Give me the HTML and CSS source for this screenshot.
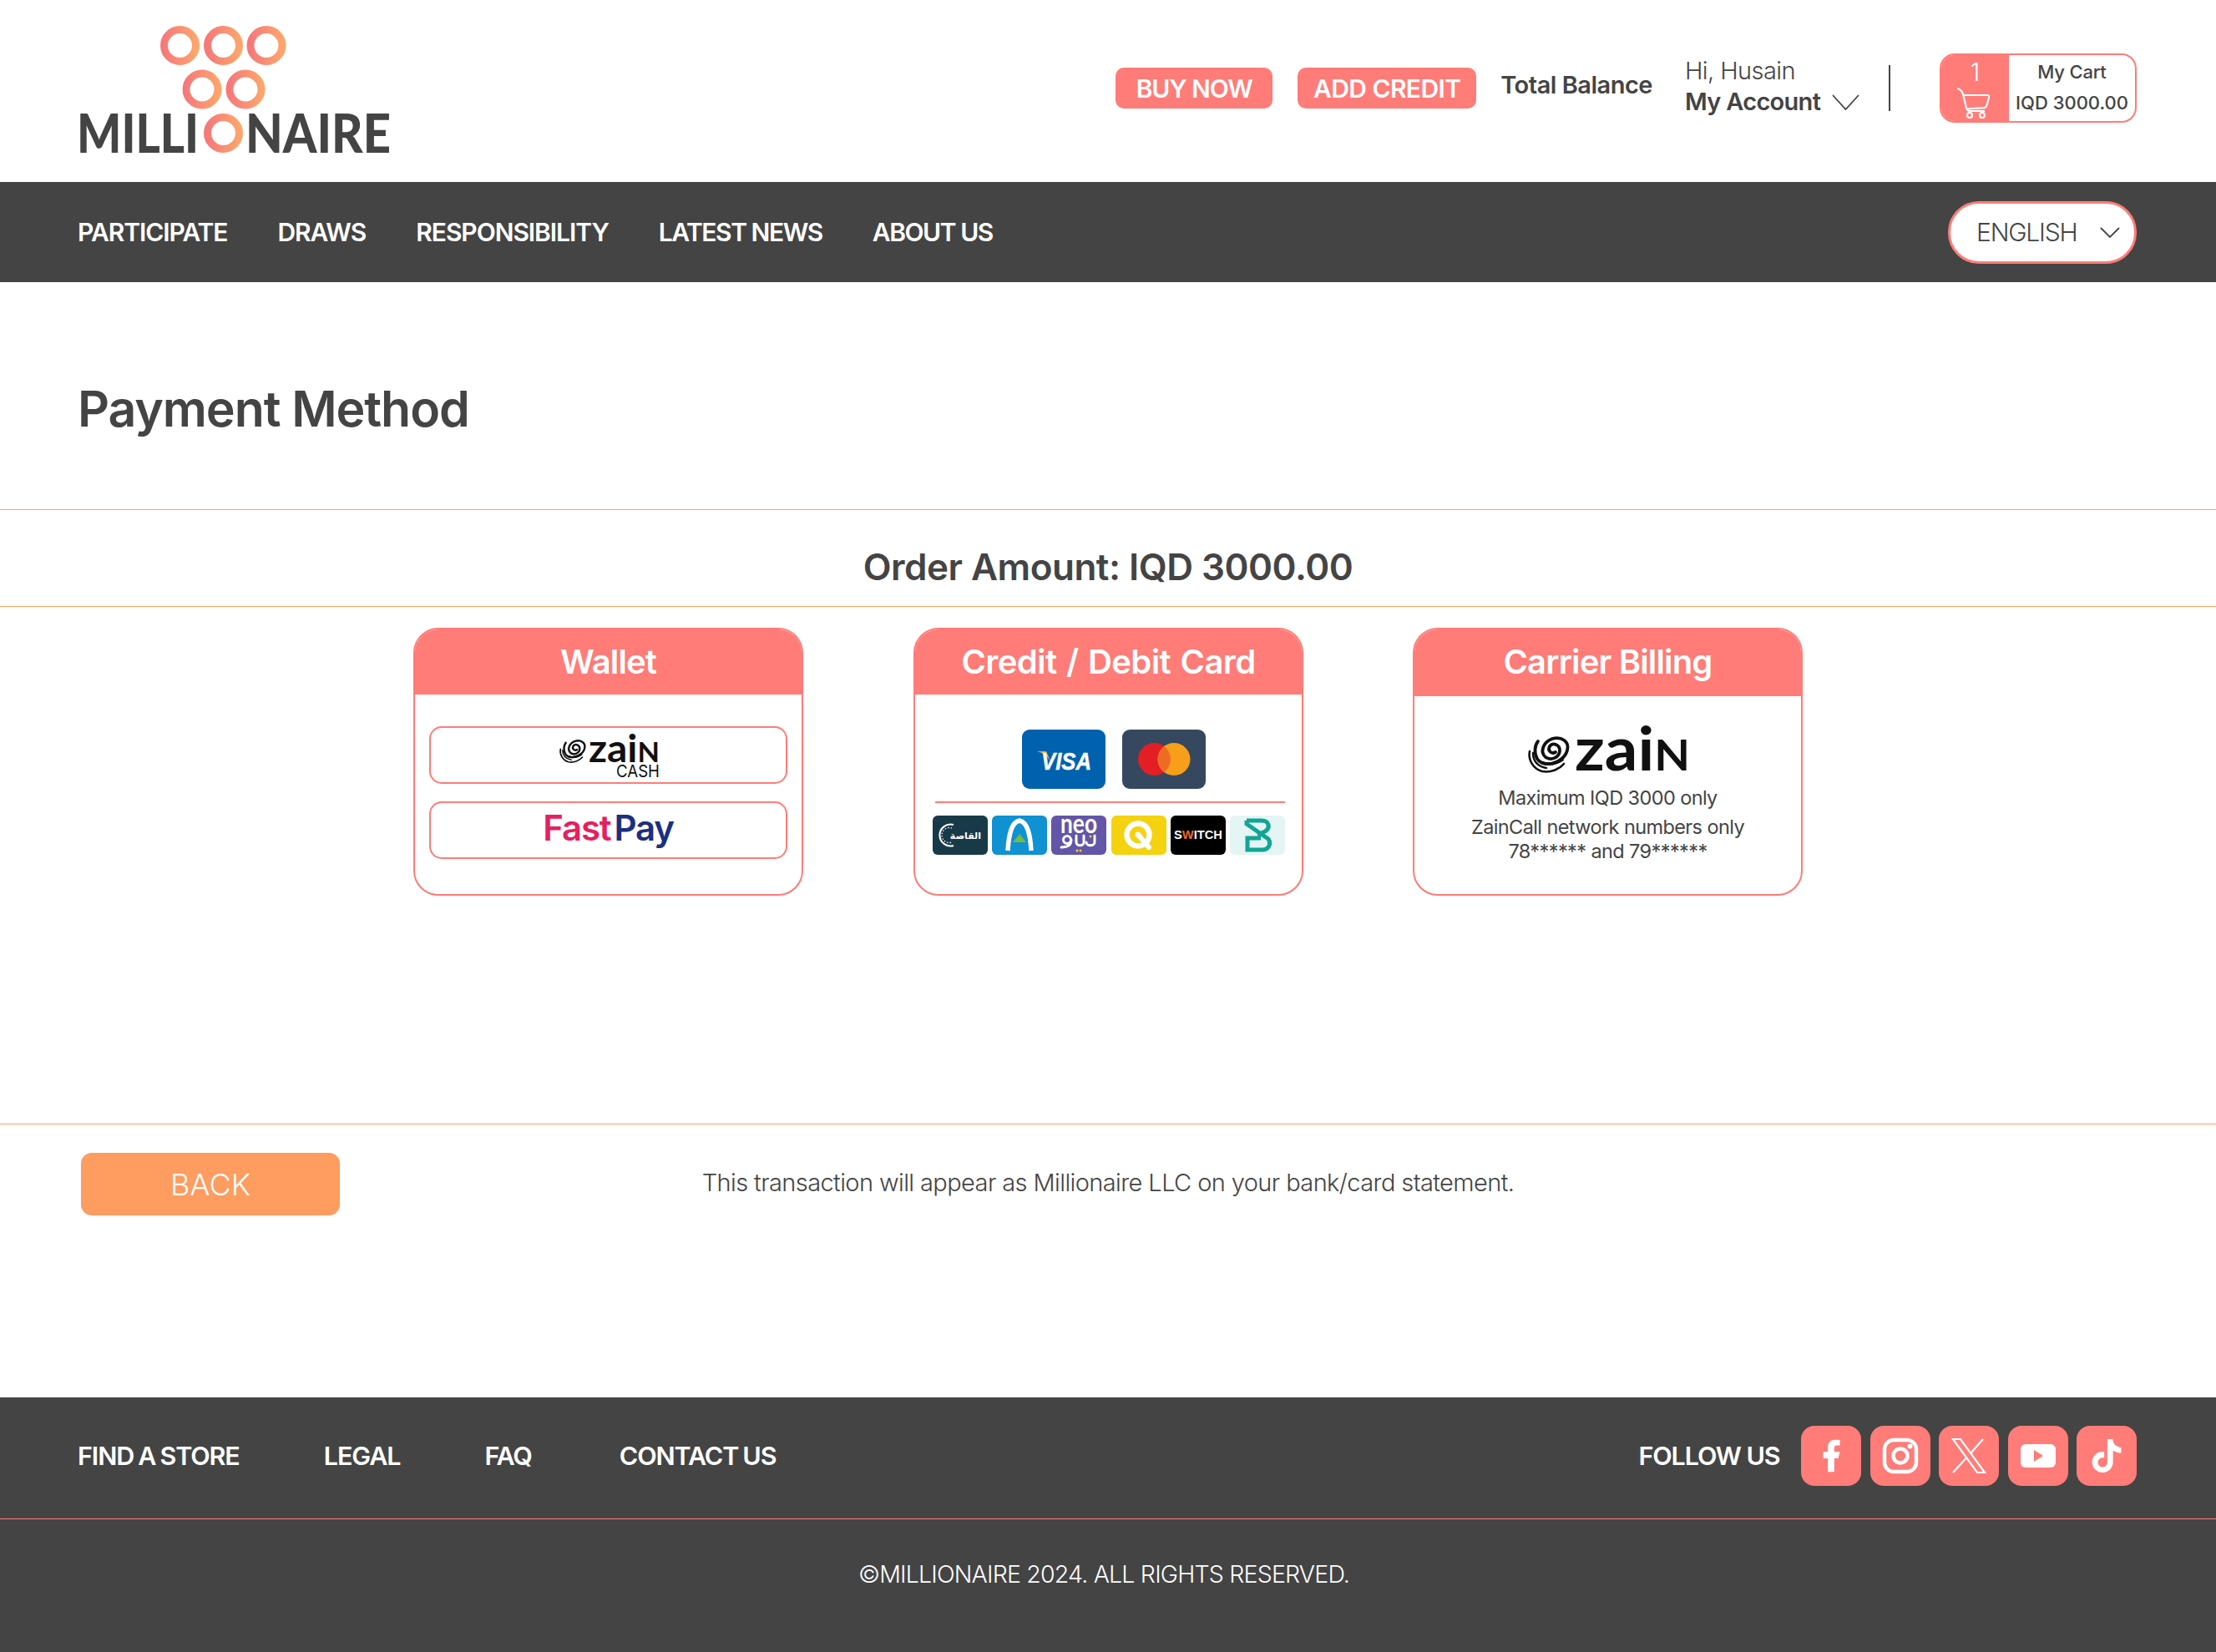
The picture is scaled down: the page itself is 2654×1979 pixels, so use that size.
FILE: index.html
```html
<!DOCTYPE html>
<html lang="en">
<head>
<meta charset="utf-8">
<title>Payment Method</title>
<link rel="stylesheet" href="styles.css">
</head>
<body>
<svg class="defs" width="0" height="0" aria-hidden="true">
  <defs>
    <linearGradient id="ring" x1="0" x2="1" y1="0" y2="0"><stop offset="0" stop-color="#f6797a"/><stop offset="1" stop-color="#fda56c"/></linearGradient>
    <symbol id="swirl" viewBox="0 0 52 50">
      <g fill="none" stroke="#111" stroke-linecap="round">
        <path stroke-width="3.800" d="M34 22C29 25 24 20 27 15C31 10 39 13 39 20C39 28 29 33 22 28C15 22 19 10 30 6C41 3 51 9 48 20C45 31 30 39 18 35"/>
        <path stroke-width="3.800" d="M13 9C9 14 8 23 12 30C17 38 32 38 42 31"/>
        <path stroke-width="2.600" d="M3 21C1 31 7 42 18 45C29 47 39 42 44 36"/>
        <path stroke-width="2.400" d="M7 23C7 33 13 39 23 41"/>
      </g>
    </symbol>
  </defs>
</svg>

<header class="top">
  <svg class="logo" width="384" height="190" viewBox="90 10 384 190" role="img" aria-label="Millionaire">
    <g class="rings">
      <circle cx="215.500" cy="54.500" r="19"/><circle cx="267.500" cy="54.500" r="19"/><circle cx="319" cy="54.500" r="19"/>
      <circle cx="242" cy="107" r="19"/><circle cx="294" cy="107" r="19"/><circle cx="267.500" cy="159.500" r="19"/>
    </g>
    <text class="logo-word" x="92" y="183" textLength="146" lengthAdjust="spacingAndGlyphs">MILLI</text>
    <text class="logo-word" x="294" y="183" textLength="174" lengthAdjust="spacingAndGlyphs">NAIRE</text>
  </svg>
  <div class="top-actions">
    <a class="pill pill-buy">BUY NOW</a>
    <a class="pill pill-credit">ADD CREDIT</a>
    <span class="balance">Total Balance</span>
    <div class="account">
      <span class="hi">Hi, Husain</span>
      <span class="my-account">My Account
        <svg class="chev-lg" width="33" height="19" viewBox="0 0 33 19"><path d="M1 1L16.500 18L32 1"/></svg>
      </span>
    </div>
    <span class="vline"></span>
    <div class="cart">
      <div class="cart-left">
        <span class="cart-count">1</span>
        <svg class="cart-icon" width="40" height="37" viewBox="0 0 40 37"><path d="M1 1C5 2 7 4 8 8L12 24C12.500 27 14 28 17 28H34"/><path d="M8.500 9H37C39 9 39.500 10 39 12L36.500 21C36 23 35 24 33 24.200L12 25.500"/><circle cx="16" cy="33" r="3"/><circle cx="31" cy="33" r="3"/></svg>
      </div>
      <div class="cart-right">
        <span class="cart-title">My Cart</span>
        <span class="cart-sum">IQD 3000.00</span>
      </div>
    </div>
  </div>
</header>

<nav class="nav">
  <div class="nav-links">
    <a>PARTICIPATE</a><a>DRAWS</a><a>RESPONSIBILITY</a><a class="nav-tight">LATEST NEWS</a><a class="nav-tight">ABOUT US</a>
  </div>
  <div class="lang">
    <span>ENGLISH</span>
    <svg class="chev-sm" width="24" height="13" viewBox="0 0 24 13"><path d="M1 1L12 12L23 1"/></svg>
  </div>
</nav>

<main class="main">
  <div class="title-block"><h1>Payment Method</h1></div>
  <div class="order">Order Amount: IQD 3000.00</div>

  <section class="methods">
    <article class="method">
      <h2 class="method-head">Wallet</h2>
      <div class="method-body wallet-body">
        <a class="option">
          <svg class="zc" width="122" height="72" viewBox="0 -14 122 72" role="img" aria-label="Zain Cash">
            <use href="#swirl" x="0" y="1" width="34" height="32"/>
            <text class="zain-word zc-word" x="36" y="30" textLength="85" lengthAdjust="spacingAndGlyphs">zai<tspan class="zc-n">N</tspan></text>
            <text class="zc-cash" x="69" y="48" textLength="52" lengthAdjust="spacingAndGlyphs">CASH</text>
          </svg>
        </a>
        <a class="option"><span class="fp"><span class="fp-fast">Fast</span><span class="fp-pay">Pay</span></span></a>
      </div>
    </article>

    <article class="method">
      <h2 class="method-head method-head-wide">Credit / Debit Card</h2>
      <div class="method-body card-body">
        <div class="big-cards">
          <svg class="big-card" width="100" height="71" viewBox="0 0 100 71">
            <rect width="100" height="71" rx="9" fill="#0061ae"/>
            <path d="M18 26H29L35 40C32 33 26 28 18 26Z" fill="#f7a823"/>
            <text class="visa" x="23" y="48" textLength="60" lengthAdjust="spacingAndGlyphs">VISA</text>
          </svg>
          <svg class="big-card" width="100" height="71" viewBox="0 0 100 71">
            <rect width="100" height="71" rx="9" fill="#364860"/>
            <circle cx="38.500" cy="35.500" r="19.500" fill="#e31e24"/>
            <circle cx="62" cy="35.500" r="19.500" fill="#f79e1b"/>
            <path d="M50.250 20A19.500 19.500 0 0 1 50.250 51A19.500 19.500 0 0 1 50.250 20Z" fill="#ef6b24"/>
          </svg>
        </div>
        <hr class="card-rule">
        <div class="small-cards">
          <svg class="small-card" width="66" height="47" viewBox="0 0 66 47">
            <rect width="66" height="47" rx="6" fill="#183a48"/>
            <path d="M25 11A13 13 0 1 0 25 36" fill="none" stroke="#fff" stroke-width="2"/>
            <path d="M23 15A9 9 0 1 0 23 32" fill="none" stroke="#fff" stroke-width="1.300" stroke-dasharray="1.500 2"/>
            <text class="qi" x="58" y="28" text-anchor="end">القاصة</text>
          </svg>
          <svg class="small-card" width="66" height="47" viewBox="0 0 66 47">
            <rect width="66" height="47" rx="6" fill="#0f91d2"/>
            <path d="M19 42C20 24 23 8 33 6C43 8 46 24 47 42" fill="none" stroke="#fff" stroke-width="5.500"/>
            <path d="M33 22L41 32H25Z" fill="#72bb44"/>
          </svg>
          <svg class="small-card" width="66" height="47" viewBox="0 0 66 47">
            <rect width="66" height="47" rx="6" fill="#6355a8"/>
            <text class="neo" x="33" y="21" text-anchor="middle" textLength="44" lengthAdjust="spacingAndGlyphs">neo</text>
            <circle cx="19" cy="29" r="4.500" fill="none" stroke="#fff" stroke-width="3"/>
            <path d="M24 29C24 36 19 38 12 38M30 24V32C30 37 39 37 39 32V24M42 32C42 37 52 37 52 32V24" fill="none" stroke="#fff" stroke-width="3" stroke-linecap="round"/>
            <circle cx="31" cy="42" r="1.500" fill="#f4d210"/><circle cx="35" cy="42" r="1.500" fill="#f4d210"/><circle cx="47" cy="25" r="1.500" fill="#f4d210"/>
          </svg>
          <svg class="small-card" width="66" height="47" viewBox="0 0 66 47">
            <rect width="66" height="47" rx="6" fill="#f4d210"/>
            <circle cx="32" cy="23" r="13.500" fill="none" stroke="#fff" stroke-width="6.500"/>
            <circle cx="32" cy="23" r="3.500" fill="#fff"/>
            <path d="M33 24L45 38" stroke="#fff" stroke-width="6" stroke-linecap="round"/>
          </svg>
          <svg class="small-card" width="66" height="47" viewBox="0 0 66 47">
            <rect width="66" height="47" rx="6" fill="#000"/>
            <text class="switch" x="33" y="28" text-anchor="middle" textLength="58" lengthAdjust="spacingAndGlyphs">S<tspan class="switch-w">W</tspan>ITCH</text>
          </svg>
          <svg class="small-card" width="66" height="47" viewBox="0 0 66 47">
            <rect width="66" height="47" rx="6" fill="#e5f4f4"/>
            <path d="M20 6H38C47 6 49 15 42 19L33 23M20 6V10L46 28C50 34 46 41 39 41H21V27H37" fill="none" stroke="#12a594" stroke-width="5"/>
          </svg>
        </div>
      </div>
    </article>

    <article class="method method-tall">
      <h2 class="method-head">Carrier Billing</h2>
      <div class="method-body carrier-body">
        <svg class="zl" width="196" height="92" viewBox="0 -20 196 92" role="img" aria-label="Zain">
          <use href="#swirl" x="0" y="3" width="54" height="50"/>
          <text class="zain-word zl-word" x="58" y="47" textLength="138" lengthAdjust="spacingAndGlyphs">zai<tspan class="zl-n">N</tspan></text>
        </svg>
        <p class="carrier-max">Maximum IQD 3000 only</p>
        <p class="carrier-net">ZainCall network numbers only<br>78****** and 79******</p>
      </div>
    </article>
  </section>

  <div class="back-row">
    <a class="back">BACK</a>
    <p class="note">This transaction will appear as Millionaire LLC on your bank/card statement.</p>
    <span></span>
  </div>
</main>

<footer class="footer">
  <div class="footer-top">
    <div class="footer-links"><a>FIND A STORE</a><a>LEGAL</a><a>FAQ</a><a>CONTACT US</a></div>
    <div class="follow">
      <span class="follow-label">FOLLOW US</span>
      <a class="social"><svg width="46" height="46" viewBox="0 0 24 24"><path class="ico-fill" d="M14 13.500h2.500l1-4H14v-2c0-1.030 0-2 2-2h1.500V2.140c-.326-.043-1.557-.14-2.857-.14C11.928 2 10 3.657 10 6.700v2.800H7v4h3V22h4v-8.500z"/></svg></a>
      <a class="social"><svg width="44" height="44" viewBox="0 0 44 44"><rect class="ico-line" x="3" y="3" width="38" height="38" rx="11" stroke-width="4.500"/><circle class="ico-line" cx="22" cy="22" r="8.500" stroke-width="4.500"/><circle class="ico-fill" cx="33.500" cy="10.500" r="3"/></svg></a>
      <a class="social"><svg width="44" height="44" viewBox="0 0 44 44"><path class="ico-line" d="M3 2H12L41 42H32Z" stroke-width="2.200"/><path class="ico-line" d="M39 2L24.500 18.500M18.500 25L3 42" stroke-width="2.200"/></svg></a>
      <a class="social"><svg width="44" height="32" viewBox="0 0 44 32"><rect class="ico-fill" x="1" y="2" width="42" height="28" rx="6"/><path class="ico-tri" d="M17 9L28 16L17 23Z"/></svg></a>
      <a class="social"><svg width="40" height="40" viewBox="0 0 24 24"><path class="ico-fill" d="M12.525.02c1.310-.02 2.610-.01 3.910-.02.08 1.530.63 3.090 1.750 4.170 1.120 1.110 2.700 1.620 4.240 1.790v4.030c-1.440-.05-2.890-.35-4.200-.97-.57-.26-1.100-.59-1.620-.93-.01 2.920.01 5.840-.02 8.750-.08 1.400-.54 2.790-1.350 3.940-1.310 1.920-3.580 3.170-5.910 3.210-1.430.08-2.860-.31-4.080-1.030-2.020-1.190-3.440-3.370-3.650-5.710-.02-.5-.03-1-.01-1.490.18-1.900 1.120-3.720 2.580-4.960 1.660-1.440 3.980-2.130 6.150-1.720.02 1.480-.04 2.960-.04 4.440-.99-.32-2.150-.23-3.020.37-.63.41-1.110 1.040-1.360 1.750-.21.51-.15 1.070-.14 1.610.24 1.640 1.820 3.020 3.500 2.870 1.120-.01 2.190-.66 2.770-1.610.19-.33.4-.67.41-1.060.1-1.790.06-3.570.07-5.360.01-4.030-.01-8.050.02-12.070z"/></svg></a>
    </div>
  </div>
  <div class="footer-bottom">©MILLIONAIRE 2024. ALL RIGHTS RESERVED.</div>
</footer>
</body>
</html>
```

FILE: styles.css
```css
* { box-sizing: border-box; }
html, body { margin: 0; padding: 0; }
body {
  width: 2654px;
  height: 1979px;
  background: #fff;
  color: #444;
  font-family: Inter, "Liberation Sans", sans-serif;
  overflow: hidden;
}
.defs { position: absolute; }
h1, h2, p { margin: 0; }

/* top bar */
.top {
  height: 218px;
  padding: 0 95px 0 90px;
  display: flex;
  justify-content: space-between;
  align-items: flex-start;
}
.logo { margin-top: 10px; display: block; }
.rings circle { fill: none; stroke: url(#ring); stroke-width: 9; }
.logo-word { font-family: Lato, sans-serif; font-weight: 900; font-size: 65px; fill: #444; }
.top-actions { display: flex; align-items: flex-start; margin-top: 64px; }
.pill {
  height: 49px;
  margin-top: 17px;
  background: #ff7c78;
  color: #fff;
  border-radius: 10px;
  display: flex;
  align-items: center;
  justify-content: center;
  font-size: 30px;
  font-weight: 600;
}
.pill-buy { width: 188px; margin-right: 30px; letter-spacing: -1.100px; }
.pill-credit { width: 214px; margin-right: 29px; letter-spacing: -.6px; }
.balance { font-size: 29px; font-weight: 600; line-height: 36px; margin-top: 20px; margin-right: 39px; letter-spacing: -.5px; }
.account { display: flex; flex-direction: column; width: 244px; }
.hi { font-size: 29px; font-weight: 300; line-height: 42px; letter-spacing: -.6px; }
.my-account { font-size: 29px; font-weight: 600; line-height: 32px; display: flex; align-items: center; gap: 14px; letter-spacing: -.7px; }
.chev-lg, .chev-sm { fill: none; stroke: #444; stroke-width: 1.800; }
.vline { width: 2px; height: 55px; background: #444; margin-top: 14px; margin-right: 59px; }
.cart {
  width: 236px;
  height: 83px;
  border: 2px solid #ff7c78;
  border-radius: 18px;
  display: flex;
  overflow: hidden;
}
.cart-left { width: 81px; background: #ff7c78; display: flex; flex-direction: column; align-items: center; color: #fff; padding-top: 1px; }
.cart-count { font-size: 30px; line-height: 38px; font-weight: 300; }
.cart-icon { fill: none; stroke: #fff; stroke-width: 2.200; margin-left: -6px; }
.cart-right { flex: 1; display: flex; flex-direction: column; align-items: center; justify-content: center; gap: 11px; font-size: 22px; font-weight: 500; padding-bottom: 3px; }
.cart-title { line-height: 26px; letter-spacing: -.2px; }
.cart-sum { line-height: 26px; letter-spacing: 0; }

/* nav */
.nav {
  height: 120px;
  background: #444;
  padding: 0 95px 0 93px;
  display: flex;
  justify-content: space-between;
  align-items: center;
}
.nav-links { display: flex; gap: 60px; color: #fff; font-size: 30px; font-weight: 600; letter-spacing: -1.050px; }
.nav-tight { letter-spacing: -1.450px; }
.lang {
  width: 226px;
  height: 75px;
  background: #fff;
  border: 3px solid #ff7c78;
  border-radius: 37px;
  display: flex;
  align-items: center;
  justify-content: space-between;
  padding: 0 17px 0 31px;
  font-size: 30px;
  font-weight: 300;
  letter-spacing: -1.200px;
  color: #444;
}

/* main */
.main { height: 1336px; }
.title-block { height: 272px; padding: 116px 0 0 93px; }
h1 { font-size: 59px; font-weight: 600; line-height: 72px; letter-spacing: -1.100px; }
.order {
  height: 117px;
  border-top: 1px solid #ff9e5e;
  border-bottom: 1px solid #ff9e5e;
  display: flex;
  align-items: center;
  justify-content: center;
  padding-top: 20px;
  font-size: 44px;
  font-weight: 600;
  letter-spacing: -.5px;
}
.methods { display: flex; justify-content: center; gap: 131px; margin-top: 25px; height: 321px; }
.method {
  width: 467px;
  height: 321px;
  border: 2px solid #ff7c78;
  border-radius: 30px;
  overflow: hidden;
  display: flex;
  flex-direction: column;
}
.method:first-child { margin-right: 1px; }
.method-head {
  height: 78px;
  flex: none;
  background: #ff7c78;
  color: #fff;
  text-align: center;
  font-size: 40px;
  font-weight: 600;
  line-height: 78px;
  letter-spacing: -.85px;
}
.method-head-wide { word-spacing: 2px; letter-spacing: -.6px; }
.method-tall .method-head { height: 80px; }
.method-body { flex: 1; }

.wallet-body { padding: 38px 17px 0; display: flex; flex-direction: column; gap: 21px; }
.option {
  height: 69px;
  border: 2px solid #ff7c78;
  border-radius: 15px;
  display: flex;
  align-items: center;
  justify-content: center;
}
.zc { display: block; flex: none; margin: 1px 0 0 3px; }
.zain-word { font-family: Lato, sans-serif; font-weight: 700; fill: #111; }
.zc-word { font-size: 46px; }
.zc-n { font-size: 33px; }
.zc-cash { font-family: Inter, sans-serif; font-size: 20px; fill: #111; }
.zl-word { font-size: 73px; }
.zl-n { font-size: 52px; }
.fp { font-family: Inter, sans-serif; font-size: 42px; font-weight: 600; letter-spacing: -1.200px; line-height: 50px; margin-bottom: 5px; }
.fp-fast { color: #e5205f; }
.fp-pay { color: #1c2f7f; margin-left: 4px; }

.card-body { padding-top: 42px; display: flex; flex-direction: column; align-items: center; }
.big-cards { display: flex; gap: 20px; margin-left: 13px; }
.big-card, .small-card { display: block; flex: none; }
.card-rule { width: 419px; height: 2px; border: 0; background: #ff7c78; margin: 15px 0 15px 3px; }
.small-cards { display: flex; justify-content: space-between; width: 422px; margin-left: 1px; }
.visa { font-family: "Liberation Sans", sans-serif; font-style: italic; font-weight: 700; font-size: 30px; fill: #fff; stroke: #fff; stroke-width: .5px; }
.qi { font-family: "DejaVu Sans", sans-serif; font-size: 11px; font-weight: 700; fill: #fff; }
.neo { font-family: Lato, sans-serif; font-weight: 700; font-size: 32px; fill: #fff; }
.switch { font-family: "Liberation Sans", sans-serif; font-weight: 700; font-size: 14px; fill: #fff; }
.switch-w { fill: #f26a21; }

.carrier-body { padding-top: 42px; display: flex; flex-direction: column; align-items: center; }
.zl { display: block; flex: none; margin: -20px 0 -7px; }
.carrier-max { font-size: 23.500px; line-height: 30px; letter-spacing: -.6px; font-weight: 400; }
.carrier-net { font-size: 23.500px; line-height: 29px; letter-spacing: -.6px; margin-top: 5px; text-align: center; }

.back-row {
  margin-top: 273px;
  border-top: 1px solid #ff9e5e;
  padding: 34px 97px 0;
  display: grid;
  grid-template-columns: 310px 1fr 310px;
}
.back {
  height: 75px;
  background: #ff9c60;
  color: #fff;
  border-radius: 13px;
  display: flex;
  align-items: center;
  justify-content: center;
  font-size: 36px;
  font-weight: 300;
}
.note { text-align: center; font-size: 29px; line-height: 72px; font-weight: 300; letter-spacing: -.6px; }

/* footer */
.footer { background: #444; color: #fff; height: 305px; }
.footer-top {
  height: 146px;
  border-bottom: 1px solid #ff7c78;
  padding: 0 95px 6px 93px;
  display: flex;
  justify-content: space-between;
  align-items: center;
}
.footer-links { display: flex; gap: 101px; font-size: 30.500px; font-weight: 600; letter-spacing: -1.100px; word-spacing: -1.500px; }
.footer-links a:last-child { margin-left: 4px; }
.follow { display: flex; align-items: center; gap: 10.500px; }
.follow-label { font-size: 30.500px; font-weight: 600; letter-spacing: -1.100px; margin-right: 15px; }
.social {
  width: 72px;
  height: 72px;
  border-radius: 16px;
  background: #ff7c78;
  display: flex;
  align-items: center;
  justify-content: center;
}
.ico-fill { fill: #fff; }
.ico-line { fill: none; stroke: #fff; }
.ico-tri { fill: #ff7c78; }
.footer-bottom { height: 159px; padding: 47px 10px 0 0; text-align: center; font-size: 28.500px; line-height: 38px; font-weight: 300; letter-spacing: -.8px; }
```
